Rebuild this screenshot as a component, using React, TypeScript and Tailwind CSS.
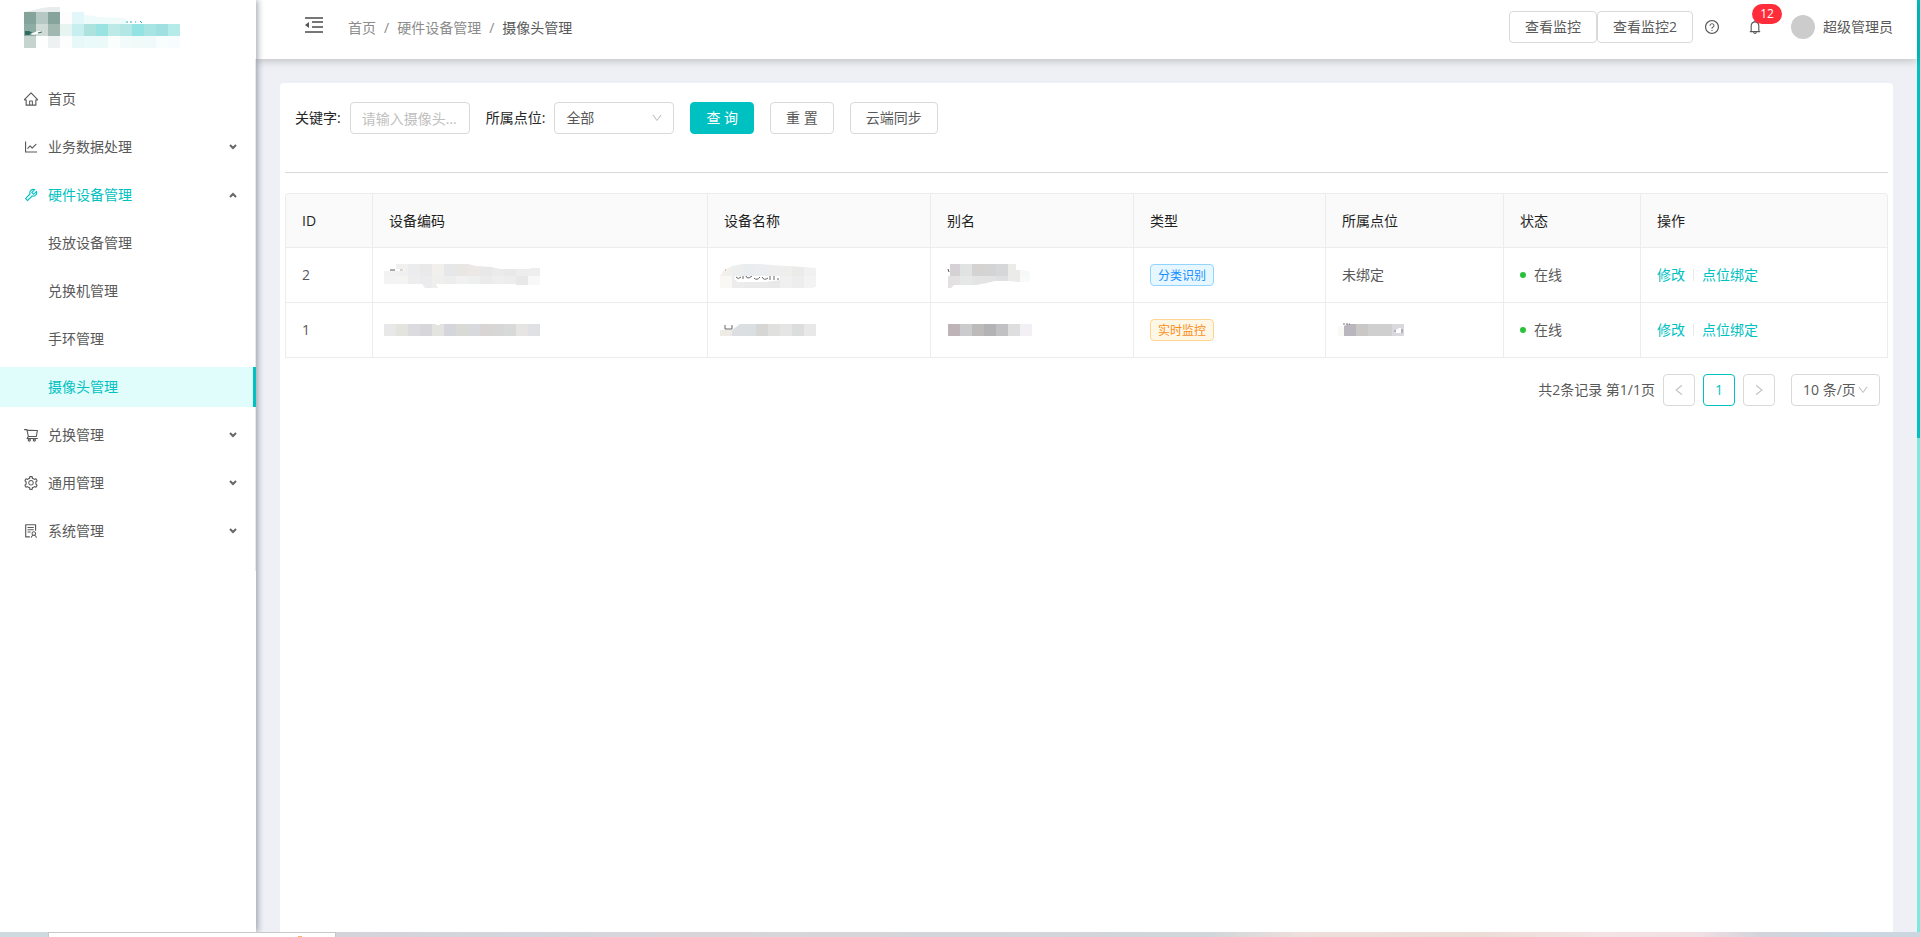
import type { ReactNode } from 'react';
import type { IconType } from 'react-icons';
import {
    AiOutlineBell,
    AiOutlineDown,
    AiOutlineHome,
    AiOutlineLeft,
    AiOutlineLineChart,
    AiOutlineQuestionCircle,
    AiOutlineRight,
    AiOutlineSetting,
    AiOutlineShoppingCart,
    AiOutlineSolution,
    AiOutlineTool,
} from 'react-icons/ai';
import clsx from 'clsx';

type MenuEntry = {
    label: string;
    icon?: IconType;
    arrow?: 'up' | 'down';
    active?: boolean;
    selected?: boolean;
};

const menu: MenuEntry[] = [
    { label: '首页', icon: AiOutlineHome },
    { label: '业务数据处理', icon: AiOutlineLineChart, arrow: 'down' },
    { label: '硬件设备管理', icon: AiOutlineTool, arrow: 'up', active: true },
    { label: '投放设备管理' },
    { label: '兑换机管理' },
    { label: '手环管理' },
    { label: '摄像头管理', selected: true },
    { label: '兑换管理', icon: AiOutlineShoppingCart, arrow: 'down' },
    { label: '通用管理', icon: AiOutlineSetting, arrow: 'down' },
    { label: '系统管理', icon: AiOutlineSolution, arrow: 'down' },
];

type BlockRow = { x: number; y: number; h?: number; colors: string[] };

// strips of 12px blocks that stand in for hidden values
function Blocks({ rows }: { rows: BlockRow[] }) {
    return (
        <g shapeRendering="crispEdges">
            {rows.map(row =>
                row.colors.map((color, i) => (
                    <rect key={`${row.y}-${i}`} x={row.x + i * 12} y={row.y} width={12} height={row.h ?? 12} fill={color} />
                ))
            )}
        </g>
    );
}

function CellMask({ children }: { children: ReactNode }) {
    return (
        <svg width="160" height="36" viewBox="0 0 160 36" className="block overflow-visible" aria-hidden="true">
            {children}
        </svg>
    );
}

const codeMask2 = (
    <CellMask>
        <clipPath id="code-2">
            <path d="M-1 14H11V7H83L91 9L107 10L115 12H143L147 11H155V28H131V27H51L53 31H40L37 27H-1Z" />
        </clipPath>
        <g clipPath="url(#code-2)">
            <Blocks
                rows={[
                    { x: -1, y: 7, colors: ['#f2f2f2', '#f0f0f0', '#ebecee', '#e9e9e9', '#f1f0ec', '#e6e7e9', '#e8e7e4', '#ebe8e6', '#e9e8e8', '#ebebeb', '#e9e9e9', '#ededed', '#eeeeee'] },
                    { x: -1, y: 19, colors: ['#f3f3f3', '#f4f4f2', '#ededee', '#ebebee', '#efefee', '#ededed', '#f0f1f0', '#eef0f0', '#ecebeb', '#eeeeee', '#eceeed', '#e8e8e8', '#f8f8f8'] },
                ]}
            />
        </g>
        <path d="M5 13H10" stroke="#595959" />
        <path d="M11 13H19" stroke="#ffffff" strokeWidth="2" />
        <path d="M15 13H18" stroke="#b8a898" />
    </CellMask>
);

const nameMask2 = (
    <CellMask>
        <clipPath id="name-2">
            <path d="M0 31V19L4 13L12 9L22 7H40L66 9L84 10L96 11V30L92 31Z" />
        </clipPath>
        <g clipPath="url(#name-2)">
            <Blocks rows={[{ x: 0, y: 19, colors: ['#f9f8f5', '#ededed', '#ebebeb', '#ebebec', '#e9e9e9', '#f0f0f0', '#ededed', '#f3f3f3'] }]} />
            <path d="M15 19H60V23L46 25H18L14 22Z" fill="#ffffff" />
            <path d="M16 20Q18 23 21 20M23 19V22M26 19Q27 23 32 19M34 21Q37 24 40 20M42 20Q44 24 48 21M50 19V23M54 19V23M57 22H59" fill="none" stroke="#666666" />
            <Blocks rows={[{ x: 0, y: 7, colors: ['#f2f0ec', '#edeeee', '#e9edf0', '#ebedee', '#efeeee', '#eeeeed', '#ebebea', '#f1f1f1'] }]} />
        </g>
        <path d="M5 13H6" stroke="#c99a55" />
    </CellMask>
);

const aliasMask2 = (
    <CellMask>
        <clipPath id="alias-2">
            <path d="M5 31V19H7V7H73V13H80L87 15V25H76L65 24H52L44 26L33 28L11 28L8 31Z" />
        </clipPath>
        <g clipPath="url(#alias-2)">
            <Blocks
                rows={[
                    { x: 5, y: 7, colors: ['#d6d1d5', '#e0e3e2', '#d4d3d1', '#d5d4d4', '#d6d7d9', '#ebebea', '#f6f9f8'] },
                    { x: 5, y: 19, colors: ['#e3e1e2', '#e6e8e7', '#e5e4e5', '#e3e3e3', '#dfe0e1', '#ebebe9', '#f8fbfa'] },
                ]}
            />
        </g>
        <path d="M5 12L6 15" stroke="#595959" />
    </CellMask>
);

const codeMask1 = (
    <CellMask>
        <Blocks rows={[{ x: -1, y: 12, colors: ['#e8e8e8', '#e4e4df', '#dcdce0', '#d7d7da', '#e3e3df', '#d5d6dc', '#d9dad6', '#d7d9dc', '#d9d5d5', '#d8d7d7', '#d8dad9', '#e6e5e4', '#e0e1e4'] }]} />
        <rect x="51" y="12" width="4" height="1" fill="#ffffff" />
    </CellMask>
);

const nameMask1 = (
    <CellMask>
        <clipPath id="name-1">
            <path d="M0 18H12L20 12H96V24H0Z" />
        </clipPath>
        <g clipPath="url(#name-1)">
            <Blocks rows={[{ x: 0, y: 12, colors: ['#eeebe4', '#dbdfe2', '#dadfe1', '#d6d6d5', '#e0e0de', '#e5e5e5', '#dcdedd', '#e8e8e8'] }]} />
        </g>
        <path d="M5 13V17H12V13" fill="none" stroke="#666666" />
    </CellMask>
);

const aliasMask1 = (
    <CellMask>
        <Blocks rows={[{ x: 5, y: 12, colors: ['#beb4b7', '#cbcbcd', '#bdbbb9', '#b3b3b5', '#c1c1c3', '#dedede', '#f3f0f5'] }]} />
    </CellMask>
);

const pointMask1 = (
    <CellMask>
        <clipPath id="point-1">
            <path d="M0 14H6L10 12H66V24H0Z" />
        </clipPath>
        <g clipPath="url(#point-1)">
            <Blocks rows={[{ x: -6, y: 12, colors: ['#f8f8f6', '#b9b6bd', '#c9c8c6', '#cfcfcf', '#cfcfcf', '#d8d8dd'] }]} />
            <path d="M58 18L61 16H63V21H58Z" fill="#ffffff" />
            <path d="M64 17V21M57 18V20" stroke="#8a87a8" />
        </g>
        <path d="M5 12H12" stroke="#77727a" strokeDasharray="2 1" />
    </CellMask>
);

type Camera = {
    id: number;
    code: ReactNode;
    name: ReactNode;
    alias: ReactNode;
    type: string;
    tagClass: string;
    point: ReactNode;
};

const cameras: Camera[] = [
    {
        id: 2,
        code: codeMask2,
        name: nameMask2,
        alias: aliasMask2,
        type: '分类识别',
        tagClass: 'border-[#91d5ff] bg-[#e6f7ff] text-[#1890ff]',
        point: '未绑定',
    },
    {
        id: 1,
        code: codeMask1,
        name: nameMask1,
        alias: aliasMask1,
        type: '实时监控',
        tagClass: 'border-[#ffd591] bg-[#fff7e6] text-[#fa8c16]',
        point: pointMask1,
    },
];

const columns = [
    { title: 'ID', width: 'w-[87px]' },
    { title: '设备编码', width: 'w-[335px]' },
    { title: '设备名称', width: 'w-[223px]' },
    { title: '别名', width: 'w-[203px]' },
    { title: '类型', width: 'w-[192px]' },
    { title: '所属点位', width: 'w-[178px]' },
    { title: '状态', width: 'w-[137px]' },
    { title: '操作', width: 'w-[247px]' },
];

function Logo() {
    return (
        <svg width="156" height="48" viewBox="24 0 156 48" className="block" role="img" aria-label="logo">
            <path d="M24 12L34 10L42 8L50 7H60V12Z" fill="#e9ecec" />
            <path d="M84 13V15L96 16V17L126 18V24H84Z" fill="#effbfa" />
            <Blocks
                rows={[
                    { x: 24, y: 12, colors: ['#84a39b', '#b6c8c3', '#87a49c', '#fdfdfd', '#e2f7f9'] },
                    { x: 24, y: 24, colors: ['#8dada4', '#d0dad7', '#a0b8b0', '#e6f5f2', '#c8efef', '#ade2df', '#99e4e3', '#bde9e7', '#b3e7e5', '#94e3e3', '#a8e4e2', '#a0e0e0', '#b5ebe9'] },
                    { x: 24, y: 36, colors: ['#c6d4d0', '#fdfefe', '#eef1f1', '#fdfdfd', '#e6f8f8', '#eaf9f9', '#ebf9f9', '#fafefd', '#f3fbfa', '#f0faf9', '#f0fafb', '#f8fefd', '#f7fdfe'] },
                ]}
            />
            <path d="M25 31H29L33 33L29 35H25Z" fill="#2f6b5e" />
            <path d="M30 34L38 31L43 32L34 35Z" fill="#ffffff" />
            <path d="M38 33L42 32" stroke="#2f6b5e" />
            <path d="M126 22H128M131 21V23M135 22H136M140 21L142 23" stroke="#13b8be" />
        </svg>
    );
}

function Chevron({ up }: { up?: boolean }) {
    return (
        <svg width="8" height="6" viewBox="0 0 8 6" fill="none" stroke="#666666" strokeWidth="2" aria-hidden="true">
            <path d={up ? 'M1 5L4 2L7 5' : 'M1 1L4 4L7 1'} />
        </svg>
    );
}

function FoldIcon() {
    return (
        <svg width="18" height="16" viewBox="0 0 18 16" fill="#777777" aria-hidden="true">
            <path d="M0 0H18V2H0ZM7 4H18V6H7ZM7 9H18V11H7ZM0 14H18V16H0Z" />
            <path d="M0 8L4 5V11Z" fill="#555555" />
        </svg>
    );
}

function Sidebar() {
    return (
        <aside className="relative z-20 w-64 shrink-0 bg-white shadow-[2px_0_6px_rgba(0,21,41,0.35)]">
            <div className="h-[59px] pl-6">
                <Logo />
            </div>
            <nav className="flex flex-col gap-2 border-r border-[#e8e8e8] pt-5 pb-5">
                {menu.map(({ label, icon: Icon, arrow, active, selected }) => (
                    <a
                        key={label}
                        href="#"
                        className={clsx(
                            'flex h-10 items-center pr-[18px]',
                            Icon ? 'pl-[23px]' : 'pl-12',
                            active && 'text-[#00c1c1]',
                            selected && '-mr-px border-r-[3px] border-[#00c1c1] bg-[#e1fdfb] text-[#00c1c1]'
                        )}
                    >
                        {Icon && <Icon size={16} className="mr-[9px] shrink-0" />}
                        <span className="flex-1">{label}</span>
                        {arrow && <Chevron up={arrow === 'up'} />}
                    </a>
                ))}
            </nav>
        </aside>
    );
}

function Button({ children, primary }: { children: ReactNode; primary?: boolean }) {
    return (
        <button
            type="button"
            className={clsx(
                'h-8 rounded border px-[15px]',
                primary ? 'border-[#00c1c1] bg-[#00c1c1] text-white' : 'border-[#d9d9d9] bg-white'
            )}
        >
            {children}
        </button>
    );
}

function Header() {
    return (
        <header className="relative z-10 flex h-[59px] shrink-0 items-start bg-white pr-6 shadow-[0_2px_8px_rgba(0,0,0,0.2)]">
            <button type="button" aria-label="收起菜单" className="mt-[17px] ml-[49px]">
                <FoldIcon />
            </button>
            <nav className="mt-[17px] ml-[25px] flex gap-2 text-[#8c8c8c]">
                <a href="#">首页</a>
                <span>/</span>
                <a href="#">硬件设备管理</a>
                <span>/</span>
                <span className="text-[#595959]">摄像头管理</span>
            </nav>
            <div className="mt-[11px] ml-auto flex h-8 items-center">
                <Button>查看监控</Button>
                <Button>查看监控2</Button>
                <button type="button" aria-label="帮助" className="ml-[11px]">
                    <AiOutlineQuestionCircle size={16} />
                </button>
                <button type="button" aria-label="通知" className="relative ml-[27px]">
                    <AiOutlineBell size={16} />
                    <span className="absolute -top-[15px] left-[5px] h-5 w-[30px] rounded-full bg-[#ff2d3a] text-center text-xs leading-5 text-white">
                        12
                    </span>
                </button>
                <span className="ml-7 size-6 rounded-full bg-[#cccccc]" />
                <span className="ml-2">超级管理员</span>
            </div>
        </header>
    );
}

function SearchForm() {
    return (
        <form className="flex items-center gap-4 pl-[10px]">
            <div className="flex items-center gap-[9px]">
                <label htmlFor="keyword" className="text-[#262626]">关键字:</label>
                <input
                    id="keyword"
                    type="text"
                    placeholder="请输入摄像头名称"
                    className="h-8 w-[120px] rounded border border-[#d9d9d9] px-[11px] text-ellipsis placeholder:text-[#bfbfbf]"
                />
            </div>
            <div className="flex items-center gap-[9px]">
                <label htmlFor="point" className="text-[#262626]">所属点位:</label>
                <div className="relative">
                    <select id="point" className="h-8 w-[120px] appearance-none rounded border border-[#d9d9d9] bg-white px-[11px]">
                        <option>全部</option>
                    </select>
                    <AiOutlineDown size={12} className="pointer-events-none absolute top-[10px] right-[11px] text-[#bfbfbf]" />
                </div>
            </div>
            <Button primary>查 询</Button>
            <Button>重 置</Button>
            <Button>云端同步</Button>
        </form>
    );
}

function CameraTable() {
    return (
        <table className="w-full table-fixed border-separate border-spacing-0 rounded-t border-t border-l border-[#ececec] text-left">
            <thead>
                <tr className="h-[54px]">
                    {columns.map(col => (
                        <th
                            key={col.title}
                            className={clsx(
                                'border-r border-b border-[#ececec] bg-[#fafafa] px-4 font-normal text-[#1f1f1f] first:rounded-tl last:rounded-tr',
                                col.width
                            )}
                        >
                            {col.title}
                        </th>
                    ))}
                </tr>
            </thead>
            <tbody>
                {cameras.map(cam => (
                    <tr key={cam.id} className="h-[55px] [&>td]:border-r [&>td]:border-b [&>td]:border-[#ececec]">
                        <td className="px-4">{cam.id}</td>
                        <td className="px-3">{cam.code}</td>
                        <td className="px-3">{cam.name}</td>
                        <td className="px-3">{cam.alias}</td>
                        <td className="px-4">
                            <span className={clsx('block h-[22px] w-fit rounded border px-[7px] text-xs leading-[22px]', cam.tagClass)}>
                                {cam.type}
                            </span>
                        </td>
                        <td className={typeof cam.point === 'string' ? 'px-4' : 'px-3'}>{cam.point}</td>
                        <td className="px-4">
                            <div className="flex items-center gap-2">
                                <span className="size-[6px] rounded-full bg-[#27c23a]" />
                                在线
                            </div>
                        </td>
                        <td className="px-4">
                            <div className="flex items-center gap-2 text-[#00c1c1]">
                                <a href="#">修改</a>
                                <span className="h-3 w-px bg-[#e8e8e8]" />
                                <a href="#">点位绑定</a>
                            </div>
                        </td>
                    </tr>
                ))}
            </tbody>
        </table>
    );
}

function Pagination() {
    return (
        <div className="mt-4 flex items-center justify-end gap-2 pr-2">
            <span>共2条记录 第1/1页</span>
            <button type="button" aria-label="上一页" disabled className="flex size-8 items-center justify-center rounded border border-[#d9d9d9] text-[#bfbfbf]">
                <AiOutlineLeft size={14} />
            </button>
            <button type="button" className="size-8 rounded border border-[#00c1c1] text-[#00c1c1]">1</button>
            <button type="button" aria-label="下一页" disabled className="flex size-8 items-center justify-center rounded border border-[#d9d9d9] text-[#bfbfbf]">
                <AiOutlineRight size={14} />
            </button>
            <div className="relative ml-2">
                <select aria-label="每页条数" className="h-8 w-[89px] appearance-none rounded border border-[#d9d9d9] bg-white px-[11px]">
                    <option>10 条/页</option>
                </select>
                <AiOutlineDown size={12} className="pointer-events-none absolute top-[10px] right-[11px] text-[#bfbfbf]" />
            </div>
        </div>
    );
}

// edge of the desktop taskbar under the page
function Taskbar() {
    return (
        <div className="relative z-30 flex h-[5px] shrink-0">
            <div className="w-12 bg-[#cfd9e0]" />
            <div className="flex w-[288px] items-end border-x border-t border-[#c8c8c8] bg-white">
                <span className="ml-[249px] h-px w-1 bg-[#ffb066]" />
            </div>
            <div className="flex-1 bg-[linear-gradient(90deg,#d5d2da_0%,#d3d6de_12%,#d8d5da_22%,#d0d6da_55%,#eedfdc_61%,#ecdcd6_72%,#f5e2e5_80%,#f1dfe3_86%,#d3d3dc_90%,#cbd7e1_95%,#cbd6e1_100%)]" />
        </div>
    );
}

export default function App() {
    return (
        <div className="flex min-h-screen flex-col bg-[#eff0f5] font-['Open_Sans','Noto_Sans_CJK_SC',sans-serif] text-sm leading-[22px] text-[#595959]">
            <div className="flex flex-1">
                <Sidebar />
                <div className="flex min-w-0 flex-1 flex-col">
                    <Header />
                    <main className="flex flex-1 flex-col px-6 pt-6">
                        <section className="flex-1 rounded-t bg-white px-[5px] pt-[19px]">
                            <SearchForm />
                            <hr className="mt-[38px] mb-5 border-[#d9d9d9]" />
                            <CameraTable />
                            <Pagination />
                        </section>
                    </main>
                </div>
                <div className="flex w-[3px] shrink-0 flex-col bg-[#7de8dc]">
                    <div className="h-[47%] bg-[#00c1c1]" />
                </div>
            </div>
            <Taskbar />
        </div>
    );
}
